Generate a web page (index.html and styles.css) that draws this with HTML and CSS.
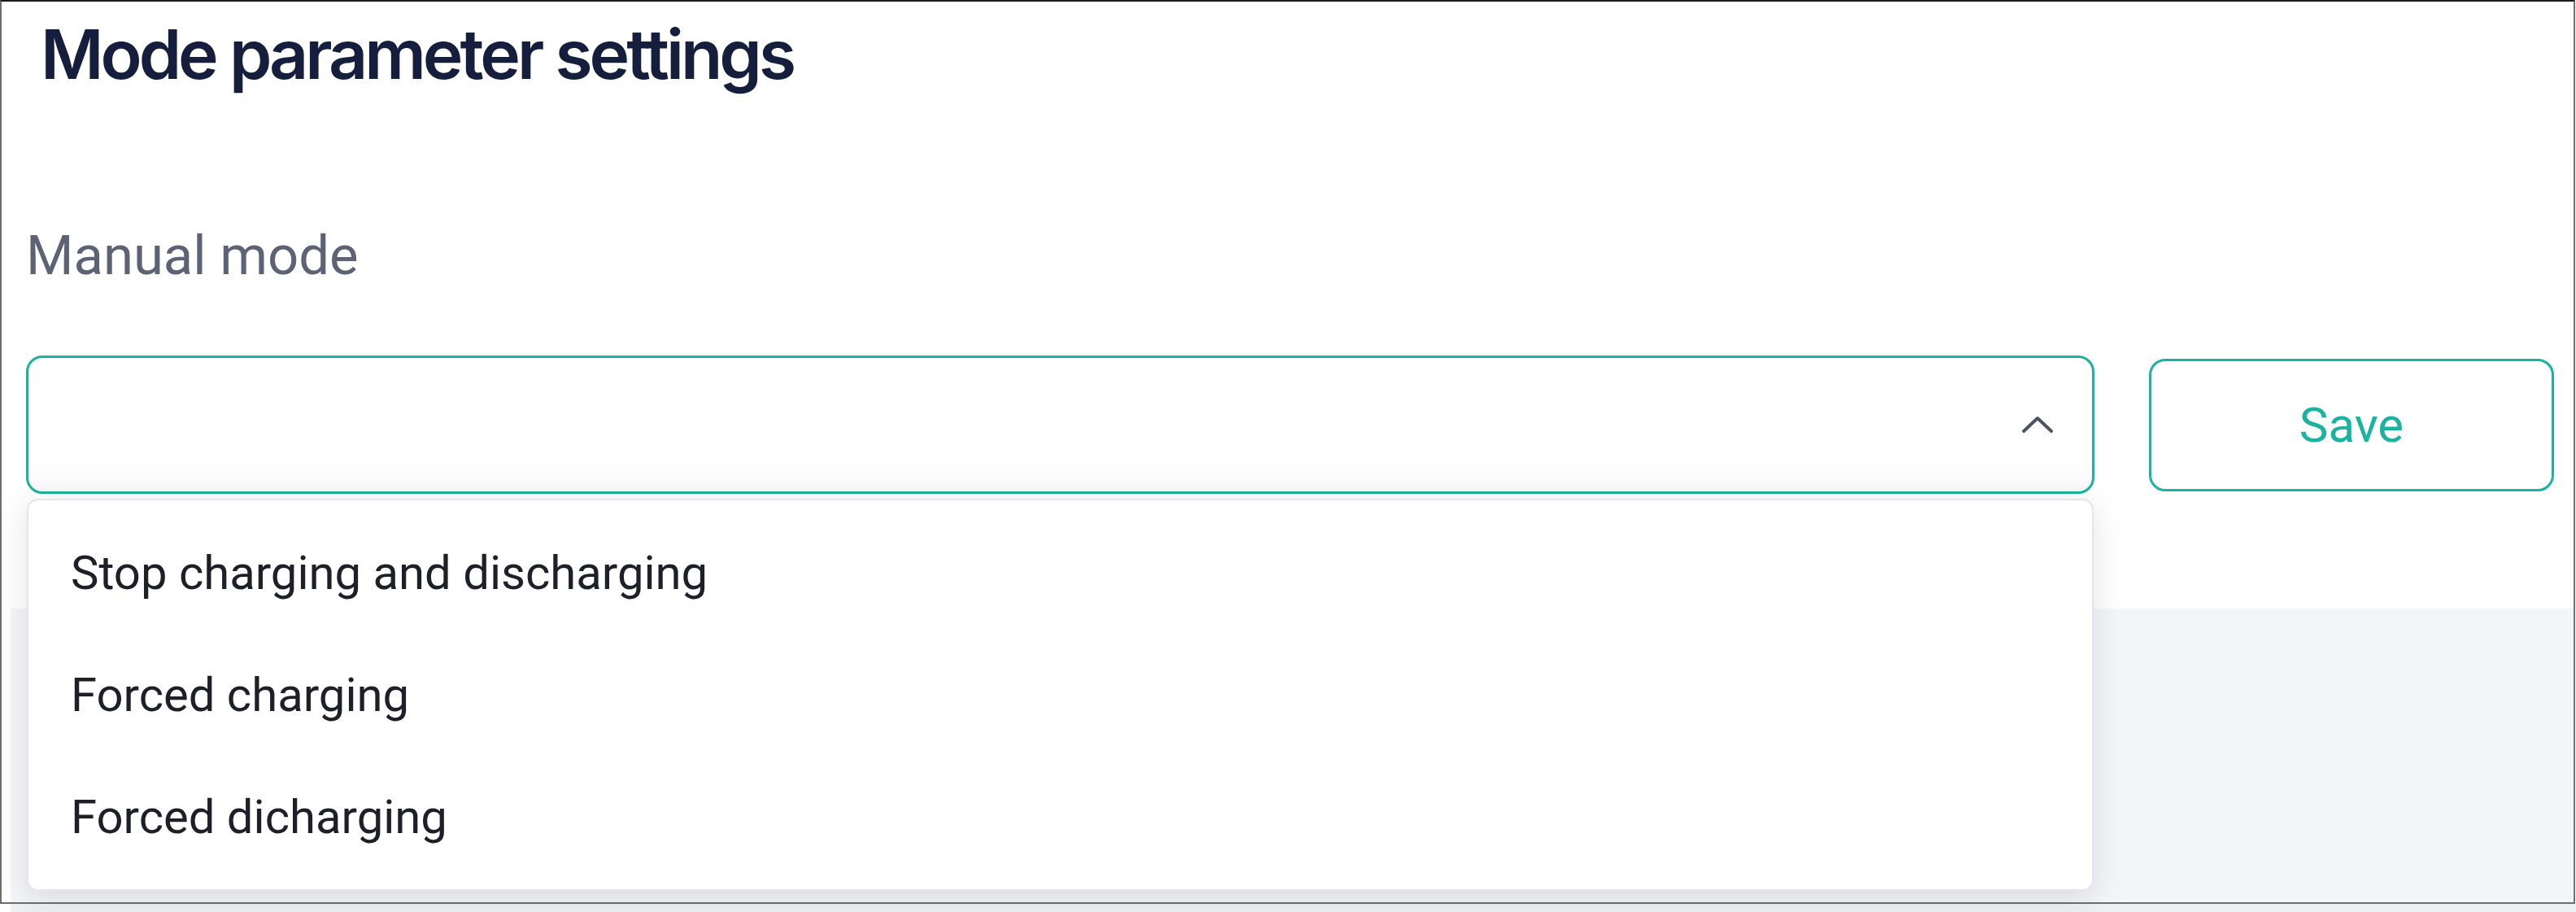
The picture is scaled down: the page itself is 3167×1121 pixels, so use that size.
FILE: index.html
```html
<!DOCTYPE html>
<html lang="en">
<head>
<meta charset="utf-8">
<title>Mode parameter settings</title>
<link rel="stylesheet" href="styles.css">
</head>
<body>
<div class="frame">
  <section class="panel">
    <h1 class="title">Mode parameter settings</h1>
    <div class="field">
      <div class="label">Manual mode</div>
      <div class="row">
        <div class="select-wrap">
          <div class="select">
            <svg class="chevron" width="40" height="22" viewBox="0 0 40 22" aria-hidden="true">
              <polyline points="3,19 20,3 37,19" fill="none" stroke="#4b5262" stroke-width="4" stroke-linecap="round" stroke-linejoin="round"/>
            </svg>
          </div>
          <ul class="dropdown">
            <li class="option">Stop charging and discharging</li>
            <li class="option">Forced charging</li>
            <li class="option">Forced dicharging</li>
          </ul>
        </div>
        <button class="save" type="button">Save</button>
      </div>
    </div>
  </section>
  <section class="lower"></section>
</div>
<div class="strip"></div>
</body>
</html>
```

FILE: styles.css
```css
* { box-sizing: border-box; }

html, body {
  margin: 0;
  padding: 0;
  background: #ffffff;
  width: 3167px;
  height: 1121px;
  overflow: hidden;
}

.frame {
  width: 3166px;
  height: 1111px;
  border: 2px solid #6e6e6e;
  border-top-color: #1c1c1c;
  display: flex;
  flex-direction: column;
  background: #ffffff;
}

.panel {
  height: 746px;
  flex: none;
  padding: 4px 24px 0 30px;
  background: #ffffff;
}

.title {
  margin: 0 0 0 18px;
  height: 120px;
  line-height: 122px;
  font-family: "Inter", "Liberation Sans", sans-serif;
  font-weight: 600;
  font-size: 84px;
  letter-spacing: -4px;
  color: #151f3d;
  white-space: nowrap;
}

.field {
  margin-top: 148px;
}

.label {
  height: 80px;
  line-height: 80px;
  font-family: "Roboto", "Liberation Sans", sans-serif;
  font-size: 67px;
  color: #5d6275;
  white-space: nowrap;
}

.row {
  margin-top: 83px;
  display: flex;
  align-items: center;
  gap: 67px;
}

.select-wrap {
  position: relative;
  flex: 1;
}

.select {
  height: 170px;
  border: 3px solid #1bb39f;
  border-radius: 20px;
  background: linear-gradient(#ffffff 75%, #f9f9fa);
  display: flex;
  align-items: center;
  justify-content: flex-end;
  padding-right: 47px;
}

.chevron {
  display: block;
}

.dropdown {
  position: absolute;
  left: 1px;
  right: 1px;
  top: calc(100% + 6px);
  margin: 0;
  padding: 14px 0;
  list-style: none;
  background: #ffffff;
  border: 2px solid #e5e6eb;
  border-radius: 14px;
  box-shadow: 0 8px 36px rgba(30, 35, 60, 0.13);
  z-index: 2;
}

.option {
  height: 150px;
  line-height: 150px;
  padding-left: 52px;
  font-family: "Roboto", "Liberation Sans", sans-serif;
  font-size: 58px;
  color: #1d2027;
  white-space: nowrap;
}

.save {
  width: 498px;
  height: 163px;
  flex: none;
  border: 3px solid #1bb39f;
  border-radius: 20px;
  background: #ffffff;
  color: #1bb39f;
  font-family: "Roboto", "Liberation Sans", sans-serif;
  font-size: 60px;
  padding: 0;
}

.lower {
  flex: 1;
  margin-left: 11px;
  background: #f4f5f8;
}

.strip {
  height: 10px;
  margin-left: 13px;
  background: #eef0f3;
}
```
